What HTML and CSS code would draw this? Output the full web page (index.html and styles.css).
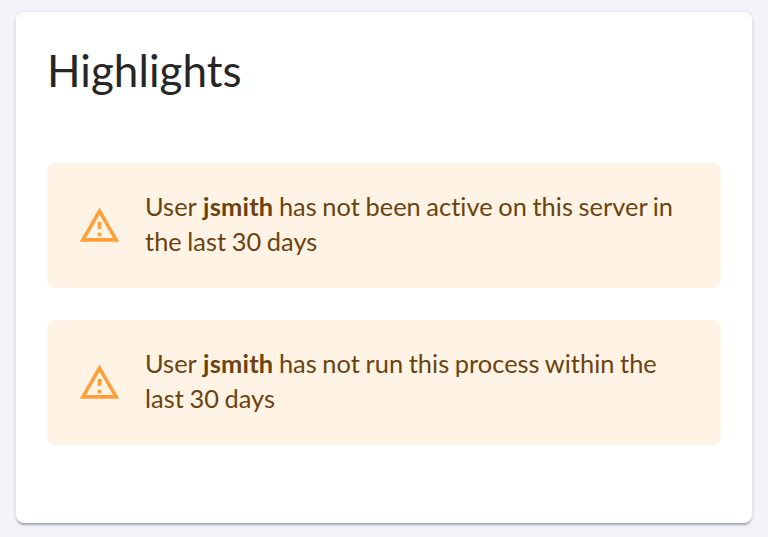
FILE: index.html
```html
<!DOCTYPE html>
<html lang="en">
<head>
<meta charset="utf-8">
<title>Highlights</title>
<link rel="stylesheet" href="styles.css">
</head>
<body>
<main class="card">
  <h1 class="title">Highlights</h1>
  <div class="alerts">
    <div class="alert">
      <svg class="icon" viewBox="0 0 24 24" aria-hidden="true"><path d="M12 5.99L19.53 19H4.47L12 5.99M12 2L1 21h22L12 2zm1 14h-2v2h2v-2zm0-6h-2v4h2v-4z"/></svg>
      <p class="message">User <strong>jsmith</strong> has not been active on this server in the last 30 days</p>
    </div>
    <div class="alert">
      <svg class="icon" viewBox="0 0 24 24" aria-hidden="true"><path d="M12 5.99L19.53 19H4.47L12 5.99M12 2L1 21h22L12 2zm1 14h-2v2h2v-2zm0-6h-2v4h2v-4z"/></svg>
      <p class="message">User <strong>jsmith</strong> has not run this process within the last 30 days</p>
    </div>
  </div>
</main>
</body>
</html>
```
FILE: styles.css
```css
* {
  box-sizing: border-box;
}

body {
  margin: 0;
  height: 537px;
  padding: 12px 16px 14px;
  background: #f2f4f9;
  font-family: Lato, sans-serif;
}

.card {
  height: 511px;
  padding: 31px 31px 32px;
  background: #fff;
  border-radius: 8px;
  box-shadow: 0 3px 2px -1px rgba(0, 0, 0, 0.26), 0 1px 4px rgba(0, 0, 0, 0.15);
}

.title {
  margin: 0;
  font-size: 44px;
  font-weight: 400;
  line-height: 55px;
  letter-spacing: 0.05px;
  color: #262626;
}

.alerts {
  display: flex;
  flex-direction: column;
  gap: 32px;
  margin-top: 65px;
}

.alert {
  display: flex;
  align-items: center;
  height: 125px;
  padding: 0 31px;
  background: #fff3e5;
  border-radius: 8px;
  color: #6b430f;
}

.icon {
  flex: none;
  width: 43px;
  height: 43px;
  margin: 0 24px 0 0;
  fill: #ffa03a;
}

.message {
  margin: 0;
  padding-bottom: 4px;
  font-size: 25.4px;
  line-height: 35px;
  letter-spacing: 0.04px;
  word-spacing: -1px;
}

.message strong {
  margin-left: 1.2px;
  letter-spacing: 0.2px;
}
```
